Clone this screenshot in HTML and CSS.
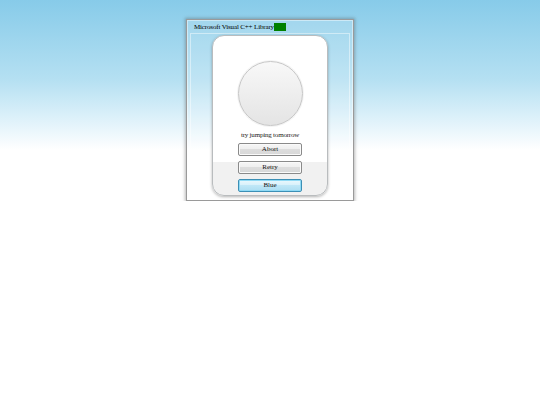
FILE: index.html
```html
<!DOCTYPE html>
<html>
<head>
<meta charset="utf-8">
<link rel="stylesheet" href="styles.css">
</head>
<body>
<div class="window">
  <div class="titlebar">
    <span class="title">Microsoft Visual C++ Library</span><span class="badge"></span>
  </div>
  <div class="panel">
    <div class="card">
      <div class="orb"></div>
      <div class="message">try jumping tomorrow</div>
      <div class="actions">
        <button class="btn">Abort</button>
        <button class="btn">Retry</button>
        <button class="btn btn-default">Blue</button>
      </div>
    </div>
  </div>
</div>
</body>
</html>
```

FILE: styles.css
```css
html {
  height: 100%;
  background: linear-gradient(to bottom, #87cbe9 0px, #b5e0f2 80px, #e4f4fb 125px, #ffffff 150px, #ffffff 100%);
  background-repeat: no-repeat;
  background-color: #ffffff;
}

body {
  margin: 0;
  font-family: "Liberation Serif", "Times New Roman", serif;
  color: #111;
}

.window {
  box-sizing: border-box;
  width: 168px;
  height: 182px;
  margin: 19px auto 0;
  border: 1px solid #9a9a9a;
  box-shadow: 0 0 3px 1px rgba(80, 80, 80, 0.4), inset 0 0 0 1px rgba(255, 255, 255, 0.45);
  background: rgba(255, 255, 255, 0.15);
  display: flex;
  flex-direction: column;
  padding: 0 3px 2px;
}

.titlebar {
  height: 14px;
  display: flex;
  align-items: center;
  padding-left: 4px;
  padding-top: 1px;
}

.title {
  font-size: 7px;
  letter-spacing: -0.15px;
  line-height: 10px;
  white-space: nowrap;
  color: #000;
}

.badge {
  display: inline-block;
  width: 12px;
  height: 8px;
  background: #008000;
}

.panel {
  flex: 1;
  border: 1px solid rgba(255, 255, 255, 0.45);
  display: flex;
  justify-content: center;
  padding: 1px 0 1px;
}

.card {
  box-sizing: border-box;
  width: 116px;
  height: 161px;
  border: 1px solid #b9bcbe;
  border-radius: 12px;
  background: linear-gradient(to bottom, #ffffff 0px, #ffffff 126px, #f1f1f1 126px, #f1f1f1 100%);
  box-shadow: 0 1px 3px rgba(0, 0, 0, 0.3);
  display: flex;
  flex-direction: column;
  align-items: center;
  padding-top: 25px;
}

.orb {
  box-sizing: border-box;
  width: 65px;
  height: 65px;
  border-radius: 50%;
  border: 1px solid #c6c6c6;
  background: linear-gradient(to bottom, #f8f8f8, #e4e4e4);
  box-shadow: 0 0 0 1px #f4f4f4;
}

.message {
  margin-top: 4px;
  font-size: 7px;
  letter-spacing: -0.2px;
  line-height: 10px;
  color: #222;
}

.actions {
  margin-top: 3px;
  display: flex;
  flex-direction: column;
  gap: 5px;
}

.btn {
  box-sizing: border-box;
  width: 64px;
  height: 13px;
  padding: 0;
  margin: 0;
  border: 1px solid #8a8a8a;
  border-radius: 2px;
  font-family: "Liberation Serif", "Times New Roman", serif;
  font-size: 7px;
  line-height: 11px;
  color: #111;
  background: linear-gradient(to bottom, #f6f6f6 0%, #efefef 45%, #dddddd 50%, #d8d8d8 100%);
  box-shadow: inset 0 0 0 1px #fafafa;
}

.btn-default {
  border-color: #3c8fb5;
  background: linear-gradient(to bottom, #eaf8fd 0%, #d8f1fb 45%, #bfe7f7 50%, #acddf2 100%);
  box-shadow: inset 0 0 0 1px #8fdaf5;
}
```
